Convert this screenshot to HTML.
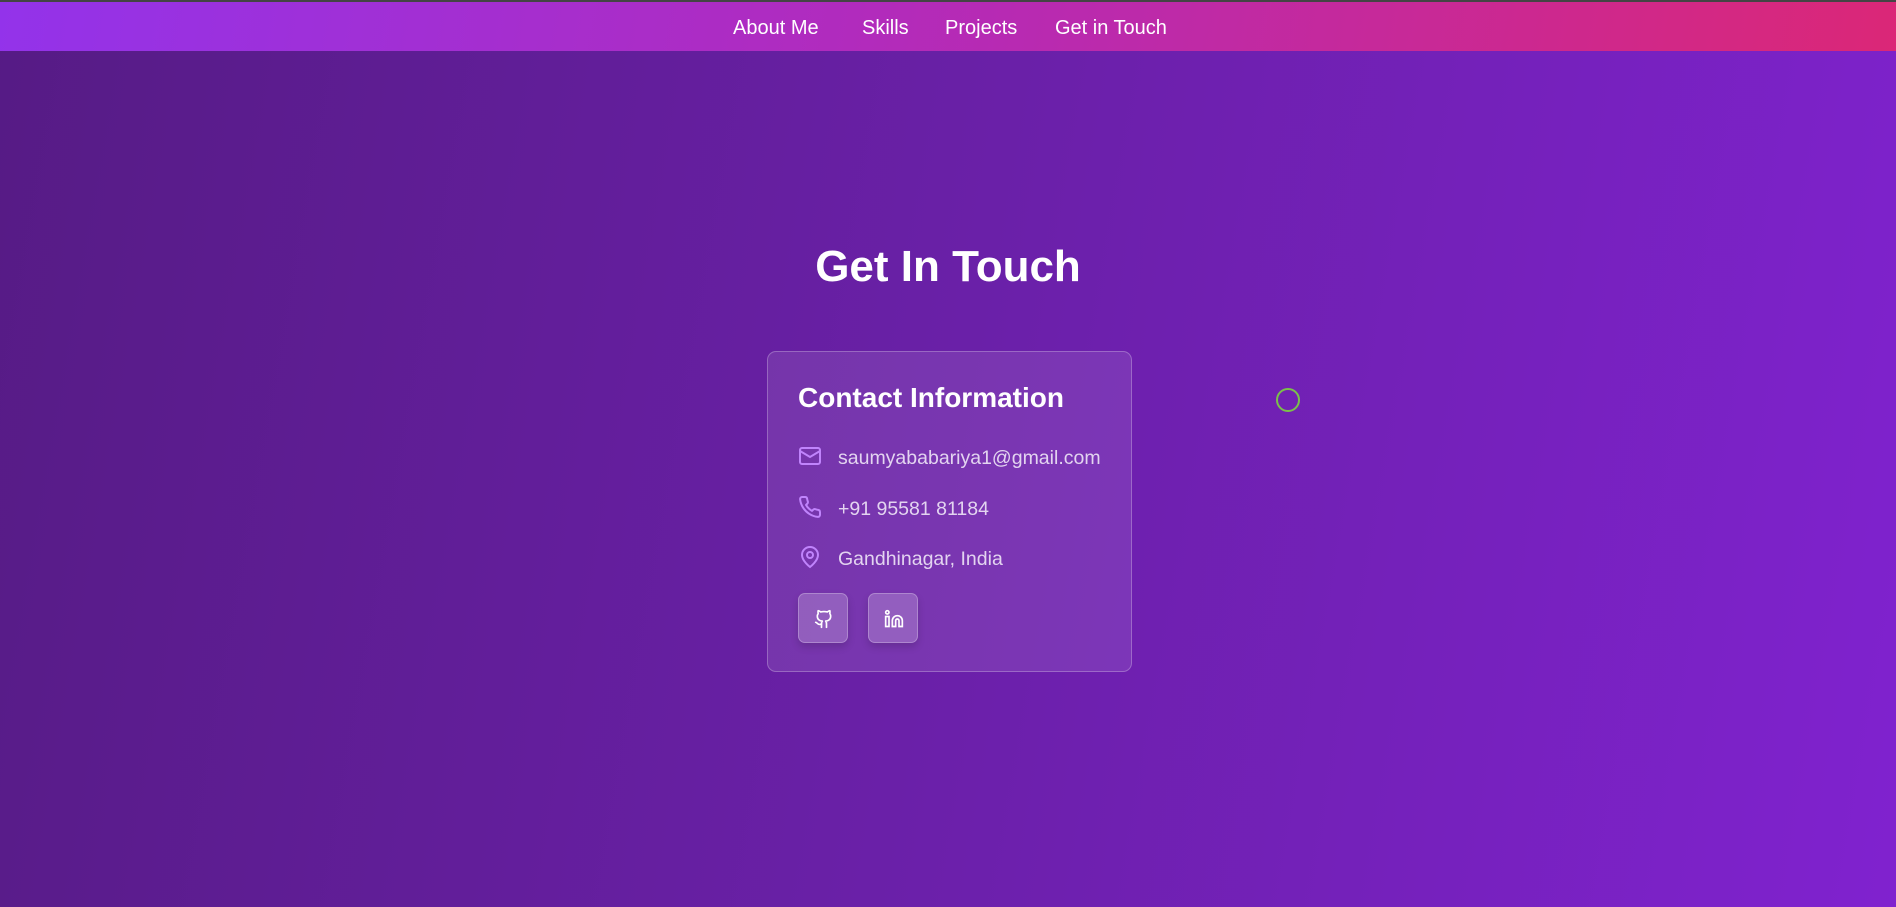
<!DOCTYPE html>
<html><head><meta charset="utf-8"><style>
*{margin:0;padding:0;box-sizing:border-box}
body{width:1896px;height:907px;overflow:hidden;font-family:"Segoe UI","Liberation Sans",sans-serif;background:linear-gradient(100deg,#561b85 0%,#6a20a8 50%,#8022cf 100%);position:relative;color:#fff}
.top{position:absolute;top:0;left:0;right:0;height:2px;background:#444}
nav{position:absolute;top:1px;left:0;right:0;height:50px;background:linear-gradient(100deg,#9333ea 0%,#b12bbd 45%,#db2777 100%);}
nav a{position:absolute;top:16px;font-size:20px;color:#fff;text-decoration:none}
h1{position:absolute;top:242px;width:1896px;left:0;text-align:center;font-size:44px;font-weight:bold}
.card{position:absolute;left:767px;top:351px;width:365px;height:321px;border:1px solid rgba(255,255,255,.25);border-radius:9px;background:rgba(255,255,255,.1)}
.card h2{position:absolute;left:30px;top:30px;font-size:28px;font-weight:bold;white-space:nowrap}
.row{position:absolute;left:30px;font-size:19.5px;color:#e3d4f0;white-space:nowrap}
.row svg{position:absolute;left:0;top:-1px}
.row span{position:absolute;left:40px;top:2px}
.btn{position:absolute;top:241px;width:50px;height:50px;border-radius:7px;background:rgba(255,255,255,.2);border:1px solid rgba(255,255,255,.25);box-shadow:0 4px 8px rgba(0,0,0,.15)}
.btn svg{position:absolute;left:15px;top:15px}
.ring{position:absolute;left:1276px;top:388px;width:24px;height:24px;border:2px solid #7bc04a;border-radius:50%}
</style></head><body>
<nav>
<a style="left:733px">About Me</a><a style="left:862px">Skills</a><a style="left:945px">Projects</a><a style="left:1055px">Get in Touch</a>
</nav>
<div class="top"></div>
<h1>Get In Touch</h1>
<div class="card">
<h2>Contact Information</h2>
<div class="row" style="top:93px"><svg width="24" height="24" viewBox="0 0 24 24" fill="none" stroke="#c084fc" stroke-width="2"><rect x="2" y="4" width="20" height="16" rx="2"/><path d="M2 7l10 6 10-6"/></svg><span>saumyababariya1@gmail.com</span></div>
<div class="row" style="top:144px"><svg width="24" height="24" viewBox="0 0 24 24" fill="none" stroke="#c084fc" stroke-width="2" stroke-linejoin="round"><path d="M22 16.9v3a2 2 0 0 1-2.2 2 19.8 19.8 0 0 1-8.6-3.1 19.5 19.5 0 0 1-6-6A19.8 19.8 0 0 1 2.1 4.2 2 2 0 0 1 4.1 2h3a2 2 0 0 1 2 1.7c.1 1 .4 1.9.7 2.8a2 2 0 0 1-.5 2.1L8 9.9a16 16 0 0 0 6 6l1.300-1.3a2 2 0 0 1 2.1-.4c.9.3 1.8.6 2.8.7a2 2 0 0 1 1.7 2z"/></svg><span>+91 95581 81184</span></div>
<div class="row" style="top:194px"><svg width="24" height="24" viewBox="0 0 24 24" fill="none" stroke="#c084fc" stroke-width="2"><path d="M20 10c0 6-8 12-8 12s-8-6-8-12a8 8 0 0 1 16 0z"/><circle cx="12" cy="10" r="3"/></svg><span>Gandhinagar, India</span></div>
<div class="btn" style="left:30px"><svg width="20" height="20" viewBox="0 0 24 24" fill="none" stroke="#fff" stroke-width="2" stroke-linecap="round" stroke-linejoin="round"><path d="M15 22v-4a4.8 4.8 0 0 0-1-3.5c3 0 6-2 6-5.5.1-1.3-.3-2.5-1-3.5.3-1.200.3-2.4 0-3.5 0 0-1 0-3 1.5-2.6-.5-5.4-.5-8 0C6 2 5 2 5 2c-.3 1.1-.3 2.3 0 3.5A5.4 5.4 0 0 0 4 9c0 3.5 3 5.5 6 5.5-.4.5-.7 1.1-.8 1.7-.2.6-.2 1.2-.2 1.8v4"/><path d="M9 18c-4.5 2-5-2-7-2"/></svg></div>
<div class="btn" style="left:100px"><svg width="20" height="20" viewBox="0 0 24 24" fill="none" stroke="#fff" stroke-width="2"><path d="M16 8a6 6 0 0 1 6 6v7h-4v-7a2 2 0 0 0-4 0v7h-4v-7a6 6 0 0 1 6-6z"/><rect x="2" y="9" width="4" height="12"/><circle cx="4" cy="4" r="2"/></svg></div>
</div>
<div class="ring"></div>
</body></html>
